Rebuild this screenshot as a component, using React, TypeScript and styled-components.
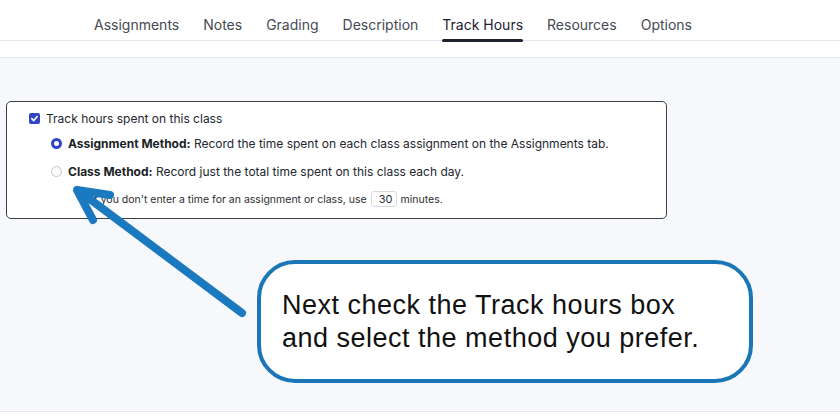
import React from "react";
import styled, { createGlobalStyle } from "styled-components";

const GlobalStyle = createGlobalStyle`
  html, body {
    margin: 0;
    padding: 0;
    background: #ffffff;
    font-family: Inter, "Noto Sans", sans-serif;
  }
`;

const Page = styled.div`
  position: relative;
  width: 840px;
  height: 420px;
  overflow: hidden;
  display: flex;
  flex-direction: column;
  background: #ffffff;
`;

const TabBar = styled.nav`
  height: 40px;
  display: flex;
  align-items: stretch;
  gap: 24px;
  padding-left: 94px;
  border-bottom: 1px solid #e4e6ea;
`;

const Tab = styled.div<{ $active?: boolean }>`
  position: relative;
  display: flex;
  align-items: center;
  padding-top: 9px;
  box-sizing: border-box;
  font-size: 14px;
  color: ${({ $active }) => ($active ? "#1c2030" : "#454a55")};
  white-space: nowrap;

  &::after {
    content: "";
    display: ${({ $active }) => ($active ? "block" : "none")};
    position: absolute;
    left: 0;
    right: 0;
    bottom: -2px;
    height: 3px;
    border-radius: 2px;
    background: #1f2330;
  }
`;

const SubBar = styled.div`
  height: 16px;
  border-bottom: 1px solid #e6e8ec;
`;

const Content = styled.main`
  flex: 0 0 354px;
  background: #f6f8fb;
  border-bottom: 1px solid #e3e5e9;
  padding: 43px 0 0 6px;
  box-sizing: border-box;
`;

const Panel = styled.section`
  width: 661px;
  height: 118px;
  box-sizing: border-box;
  background: #ffffff;
  border: 1px solid #3d3f44;
  border-radius: 5px;
  padding: 8px 0 0 22px;
  display: flex;
  flex-direction: column;
  font-size: 12px;
  color: #23262d;
`;

const Row = styled.label<{ $indent?: number; $height: number }>`
  display: flex;
  align-items: center;
  gap: 6px;
  height: ${({ $height }) => $height}px;
  padding-left: ${({ $indent }) => $indent ?? 0}px;
`;

const Box = styled.span`
  width: 11px;
  height: 11px;
  border-radius: 2px;
  background: #2f45c6;
  display: flex;
  align-items: center;
  justify-content: center;
`;

const Radio = styled.span<{ $checked?: boolean }>`
  width: 11px;
  height: 11px;
  box-sizing: border-box;
  border-radius: 50%;
  background: ${({ $checked }) => ($checked ? "#ffffff" : "#fbfbfc")};
  border: ${({ $checked }) => ($checked ? "3.5px solid #2f45c6" : "1px solid #c4c7cd")};
`;

const Strong = styled.b`
  font-weight: 700;
  color: #1b1e25;
`;

const Note = styled.div`
  display: flex;
  align-items: center;
  gap: 4px;
  height: 34px;
  padding-left: 62px;
  font-size: 10.5px;
  color: #2a2d33;
`;

const MinutesInput = styled.span`
  display: inline-flex;
  align-items: center;
  justify-content: flex-end;
  width: 26px;
  height: 16px;
  box-sizing: border-box;
  padding-right: 3px;
  border: 1px solid #d5d8dd;
  border-radius: 3px;
  font-size: 11px;
  color: #2a2d33;
`;

const Callout = styled.div`
  position: absolute;
  left: 257px;
  top: 260px;
  width: 496px;
  height: 123px;
  box-sizing: border-box;
  border: 4px solid #1b76b7;
  border-radius: 38px;
  background: #ffffff;
  padding: 25px 0 0 21px;
  font-family: "Liberation Sans", Arial, sans-serif;
  font-size: 27px;
  letter-spacing: 0.5px;
  line-height: 33px;
  color: #111111;
`;

const Arrow = styled.svg`
  position: absolute;
  left: 0;
  top: 0;
  pointer-events: none;
`;

const tabs = [
  "Assignments",
  "Notes",
  "Grading",
  "Description",
  "Track Hours",
  "Resources",
  "Options",
];

const App: React.FC = () => {
  return (
    <>
      <GlobalStyle />
      <Page>
        <TabBar>
          {tabs.map((t) => (
            <Tab key={t} $active={t === "Track Hours"}>
              {t}
            </Tab>
          ))}
        </TabBar>
        <SubBar />
        <Content>
          <Panel>
            <Row $height={16}>
              <Box>
                <svg width="9" height="9" viewBox="0 0 10 10">
                  <path
                    d="M2 5.2 L4.2 7.3 L8 2.8"
                    fill="none"
                    stroke="#fff"
                    strokeWidth="1.8"
                    strokeLinecap="round"
                    strokeLinejoin="round"
                  />
                </svg>
              </Box>
              Track hours spent on this class
            </Row>
            <Row $indent={22} $height={34}>
              <Radio $checked />
              <span>
                <Strong>Assignment Method:</Strong> Record the time spent on
                each class assignment on the Assignments tab.
              </span>
            </Row>
            <Row $indent={22} $height={22}>
              <Radio />
              <span>
                <Strong>Class Method:</Strong> Record just the total time spent
                on this class each day.
              </span>
            </Row>
            <Note>
              If you don't enter a time for an assignment or class, use
              <MinutesInput>30</MinutesInput>
              minutes.
            </Note>
          </Panel>
        </Content>
        <Arrow width="840" height="420" viewBox="0 0 840 420">
          <g
            stroke="#1b79bf"
            strokeWidth="8"
            strokeLinecap="round"
            strokeLinejoin="round"
            fill="none"
          >
            <path d="M242 313 L79 191" />
            <path d="M110 195 L77 190 L93 220" />
          </g>
        </Arrow>
        <Callout>
          Next check the Track hours box
          <br />
          and select the method you prefer.
        </Callout>
      </Page>
    </>
  );
};

export default App;
